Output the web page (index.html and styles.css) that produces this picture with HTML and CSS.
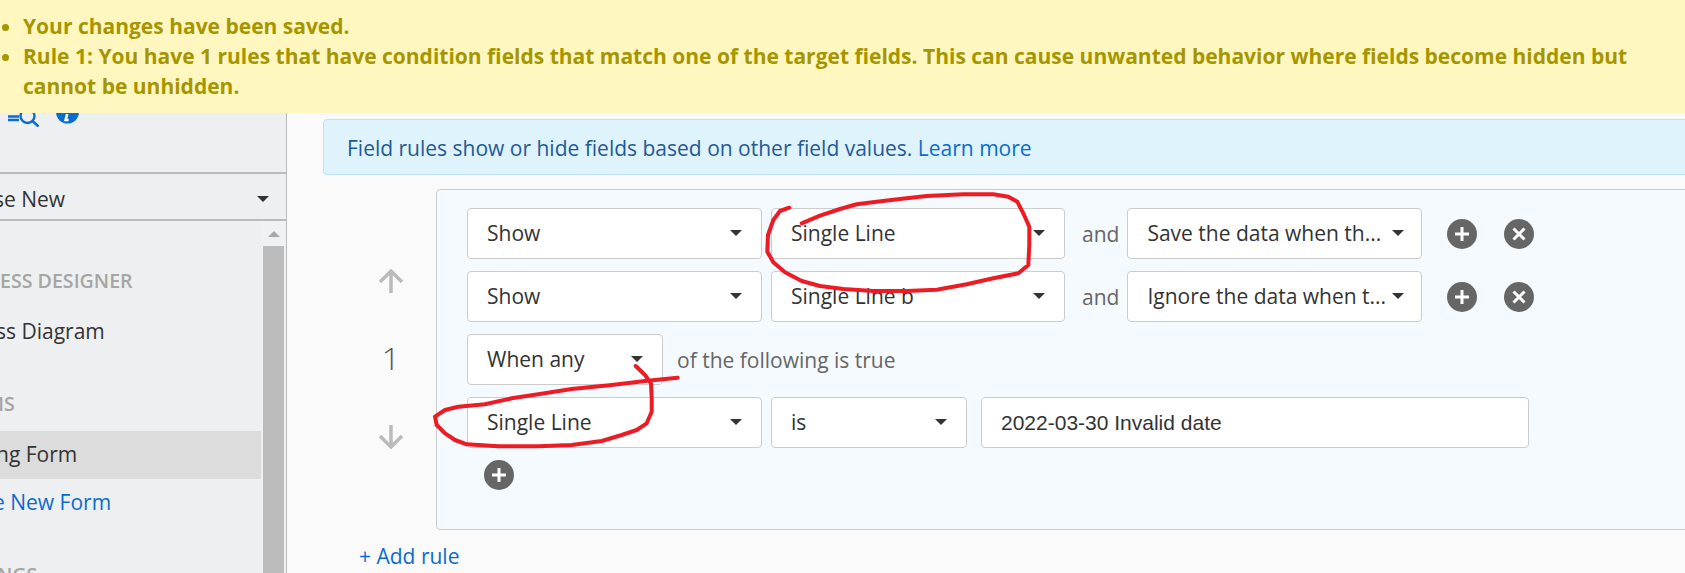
FILE: index.html
```html
<!DOCTYPE html>
<html lang="en">
<head>
    <meta charset="UTF-8">
    <meta name="viewport" content="width=device-width, initial-scale=1.0">
    <title>Field Rules</title>
    <link rel="stylesheet" href="styles.css">
</head>
<body>
    <div class="notice">
        <ul>
            <li>Your changes have been saved.</li>
            <li>Rule 1: You have 1 rules that have condition fields that match one of the target fields. This can cause unwanted behavior where fields become hidden but cannot be unhidden.</li>
        </ul>
    </div>

    <div class="page">
        <aside class="sidebar">
            <div class="side-tools">
                <svg class="tools-icon" width="80" height="26" viewBox="0 0 80 26">
                    <path d="M8 15.500h11M8 19h11" stroke="#0a6cd0" stroke-width="2.400" fill="none"/>
                    <circle cx="27.500" cy="15" r="7" stroke="#0a6cd0" stroke-width="2.400" fill="none"/>
                    <path d="M32.500 20l6 5.500" stroke="#0a6cd0" stroke-width="2.600" fill="none"/>
                    <circle cx="67.500" cy="11" r="11.500" fill="#0a6cd0"/>
                    <path d="M67.200 13l-1.600 6h3" stroke="#fff" stroke-width="2.600" fill="none"/>
                </svg>
            </div>
            <div class="side-select">
                <span class="clip-new">se New</span>
                <span class="caret"></span>
            </div>
            <div class="side-body">
                <div class="side-list">
                    <div class="side-head">ESS DESIGNER</div>
                    <div class="side-item clip-diagram">ss Diagram</div>
                    <div class="side-head clip-forms">MS</div>
                    <div class="side-item active clip-form">ng Form</div>
                    <div class="side-item link clip-create">e New Form</div>
                    <div class="side-head clip-settings">NGS</div>
                </div>
                <div class="scrollbar">
                    <span class="scroll-up"></span>
                    <span class="scroll-thumb"></span>
                </div>
            </div>
        </aside>

        <main class="content">
            <div class="info">Field rules show or hide fields based on other field values. <a href="#">Learn more</a></div>

            <div class="rule">
                <div class="rule-index">
                    <svg class="arrow-up" width="24" height="24" viewBox="0 0 24 24">
                        <path d="M12 24V2M1 13L12 2l11 11" stroke="#bbb" stroke-width="3.500" fill="none"/>
                    </svg>
                    <div class="rule-num">1</div>
                    <svg class="arrow-down" width="24" height="24" viewBox="0 0 24 24">
                        <path d="M12 0v22M1 11l11 11 11-11" stroke="#bbb" stroke-width="3.500" fill="none"/>
                    </svg>
                </div>

                <div class="rule-card">
                    <div class="row">
                        <div class="select wide">Show<span class="caret"></span></div>
                        <div class="select mid">Single Line<span class="caret"></span></div>
                        <span class="word and">and</span>
                        <div class="select wide action">Save the data when th...<span class="caret"></span></div>
                        <svg class="round first" width="30" height="30" viewBox="0 0 30 30"><circle cx="15" cy="15" r="15" fill="#666"/><path d="M15 8v14M8 15h14" stroke="#fff" stroke-width="3"/></svg>
                        <svg class="round" width="30" height="30" viewBox="0 0 30 30"><circle cx="15" cy="15" r="15" fill="#666"/><path d="M9.500 9.500l11 11M20.500 9.500l-11 11" stroke="#fff" stroke-width="3"/></svg>
                    </div>
                    <div class="row">
                        <div class="select wide">Show<span class="caret"></span></div>
                        <div class="select mid">Single Line b<span class="caret"></span></div>
                        <span class="word and">and</span>
                        <div class="select wide action">Ignore the data when t...<span class="caret"></span></div>
                        <svg class="round first" width="30" height="30" viewBox="0 0 30 30"><circle cx="15" cy="15" r="15" fill="#666"/><path d="M15 8v14M8 15h14" stroke="#fff" stroke-width="3"/></svg>
                        <svg class="round" width="30" height="30" viewBox="0 0 30 30"><circle cx="15" cy="15" r="15" fill="#666"/><path d="M9.500 9.500l11 11M20.500 9.500l-11 11" stroke="#fff" stroke-width="3"/></svg>
                    </div>
                    <div class="row">
                        <div class="select narrow">When any<span class="caret"></span></div>
                        <span class="word of">of the following is true</span>
                    </div>
                    <div class="row">
                        <div class="select wide">Single Line<span class="caret"></span></div>
                        <div class="select narrow">is<span class="caret"></span></div>
                        <div class="value">2022-03-30 Invalid date</div>
                    </div>
                    <svg class="round add-cond" width="30" height="30" viewBox="0 0 30 30"><circle cx="15" cy="15" r="15" fill="#666"/><path d="M15 8v14M8 15h14" stroke="#fff" stroke-width="3"/></svg>
                </div>
            </div>

            <a class="add-rule" href="#">+ Add rule</a>
        </main>
    </div>

    <!-- red marker scribbles on top of the screenshot -->
    <svg class="scribble" width="1685" height="573" viewBox="0 0 1685 573">
        <path d="M789.300 207.700L780 211L773.300 220L768 235L767.300 251.700L773.300 262.300L785 272.300L801.700 281L820 286L843.300 289L873.300 291L906.700 291L936.700 289.700L966.700 284.300L993.300 278.300L1018.300 273.300L1028.300 265L1029.300 245L1029.300 226.700L1023.300 213.300L1017.300 201.700L1008.300 196.700L993.300 194.300L963.300 194.300L926.700 196L900 199L876.700 201.700L856.700 204.300L840 209L820 215.700L801.700 223.300"/>
        <path d="M635.700 366L645 375L651 383.300L651.700 398.300L651.700 411.700L646.700 423.300L636.700 430L621.700 435L601.700 441L571.700 445L538.300 446.300L498.300 446.300L466.700 444.300L455 440L445 433.300L436.700 425L435 416.700L445 410L458.300 406.700L485 404.300L511.700 398.300L538.300 394.300L571.700 389L611.700 385L645 381L677.700 377.700"/>
    </svg>
</body>
</html>
```

FILE: styles.css
```css
* { box-sizing: border-box; }
html, body { margin: 0; height: 573px; overflow: hidden; }
body { font-family: "Open Sans", sans-serif; font-size: 21px; color: #333; background: #fafafa; position: relative; }
a { color: #0a6cd0; text-decoration: none; }

.notice { position: absolute; top: 0; left: 0; right: 0; height: 113px; padding: 11px 40px 0 23px; background: #fff7bf; color: #a59600; font-weight: 700; line-height: 30px; z-index: 2; }
.notice ul { margin: 0; padding: 0; }

.page { display: flex; height: 573px; }

/* left column */
.sidebar { width: 287px; flex: none; background: #eeeff1; border-right: 1px solid #bbb; display: flex; flex-direction: column; overflow: hidden; }
.side-tools { height: 174px; border-bottom: 2px solid #bbb; padding-top: 101px; }
.tools-icon { display: block; }
.side-select { height: 47px; padding: 4px 17px 0 0; border-bottom: 2px solid #bbb; display: flex; justify-content: space-between; align-items: center; }
.side-body { flex: 1; display: flex; min-height: 0; }
.side-list { width: 261px; flex: none; padding-top: 48px; overflow: hidden; }
.side-head { height: 24px; line-height: 24px; font-size: 19.6px; font-weight: 600; color: #a5a5a5; margin-bottom: 15px; white-space: nowrap; }
.side-item { height: 48px; line-height: 47px; color: #333; margin-bottom: 36px; white-space: nowrap; }
.side-item.active { background: #dcdcdc; margin-bottom: 0; }
.side-item.link { color: #0a6cd0; }
.clip-new { margin-left: -6px; }
.clip-diagram { text-indent: -4px; }
.clip-form { text-indent: -4px; }
.clip-create { text-indent: -7px; }
.clip-forms { text-indent: -14px; }
.clip-settings { text-indent: -3px; }
.scrollbar { width: 25px; padding: 0 2px; background: #f0f1f2; display: flex; flex-direction: column; align-items: center; }
.scroll-up { margin-top: 10px; border-left: 6px solid transparent; border-right: 6px solid transparent; border-bottom: 6px solid #a8a8a8; }
.scroll-thumb { width: 21px; flex: 1; margin-top: 9px; background: #bcbcbc; }

.caret { width: 0; height: 0; border-left: 6px solid transparent; border-right: 6px solid transparent; border-top: 6px solid #333; flex: none; }

/* rules */
.content { flex: 1; min-width: 0; padding: 119px 0 0 36px; overflow: hidden; }
.info { height: 56px; margin-right: -20px; padding-left: 23px; line-height: 56px; background: #dff3fd; border: 1px solid #bde3f5; border-radius: 4px; color: #1f5a96; }

.rule { display: flex; margin-top: 14px; margin-right: -20px; }
.rule-index { width: 113px; flex: none; height: 341px; padding-left: 23px; display: flex; flex-direction: column; align-items: center; }
.arrow-up { margin-top: 80px; }
.rule-num { margin-top: 45px; height: 40px; line-height: 40px; font-size: 32px; font-weight: 300; color: #555; }
.arrow-down { margin-top: 47px; }

.rule-card { flex: 1; height: 341px; padding: 18px 0 0 30px; background: #f5fafe; border: 1px solid #ccc; border-radius: 4px; }
.row { display: flex; align-items: center; height: 51px; margin-bottom: 12px; }
.select { height: 51px; padding: 0 19px 2px 19px; margin-right: 9px; background: #fff; border: 1px solid #ccc; border-radius: 4px; display: flex; justify-content: space-between; align-items: center; white-space: nowrap; flex: none; }
.select.wide { width: 295px; }
.select.mid { width: 294px; margin-right: 10px; }
.select.narrow { width: 196px; }
.select.action { padding-right: 17px; margin-right: 0; }
.word { color: #666; }
.word.and { margin: 0 8px 0 7px; }
.word.of { margin-left: 5px; }
.value { width: 548px; height: 51px; margin-left: 5px; padding-left: 19px; line-height: 49px; background: #fff; border: 1px solid #ccc; border-radius: 4px; font-family: "Liberation Sans", Arial, sans-serif; font-size: 21px; }
.round { display: block; flex: none; }
.round.first { margin-left: 25px; margin-right: 27px; }
.add-cond { margin: 0 0 0 17px; }
.add-rule { display: block; margin: 14px 0 0 36px; height: 24px; line-height: 24px; }

.scribble { position: absolute; top: 0; left: 0; z-index: 3; pointer-events: none; }
.scribble path { fill: none; stroke: #ed1c24; stroke-width: 4; stroke-linejoin: round; stroke-linecap: round; }
```
